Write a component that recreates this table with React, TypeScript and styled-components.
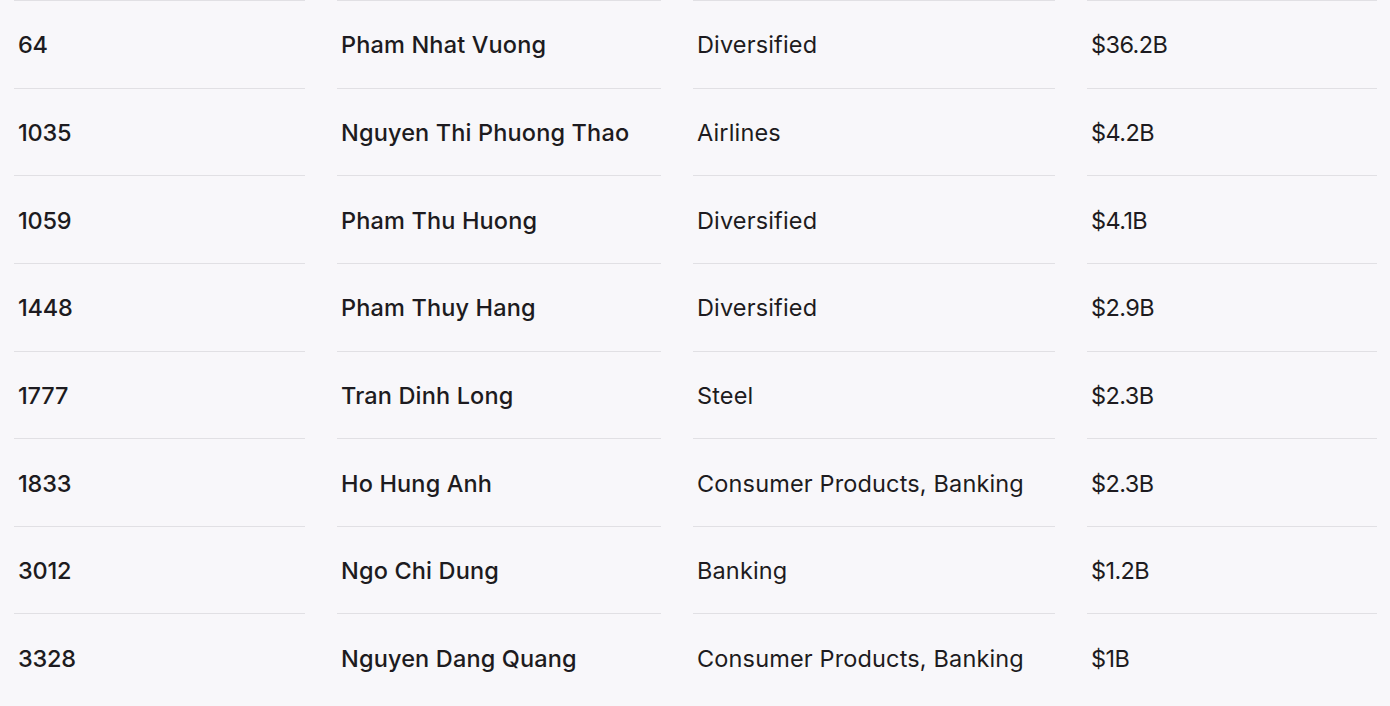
import styled, { createGlobalStyle } from 'styled-components';
import { Fragment } from 'react';

const GlobalStyle = createGlobalStyle`
    html, body {
        margin: 0;
        padding: 0;
        background: #f8f7fa;
        overflow: hidden;
    }
    body {
        font-family: Inter, Roboto, "Liberation Sans", sans-serif;
        color: #1d1b20;
    }
`;

const Table = styled.div`
    display: grid;
    grid-template-columns: 291px 324px 362px 290px;
    grid-auto-rows: 87.65px;
    column-gap: 32px;
    padding-left: 14px;
    width: 1390px;
    height: 706px;
    box-sizing: border-box;
    background: #f8f7fa;
    overflow: hidden;
`;

const Cell = styled.div<{ $strong?: boolean; $text?: boolean }>`
    box-sizing: border-box;
    display: flex;
    align-items: center;
    padding-left: 4px;
    padding-top: 1px;
    border-top: 1px solid #e1e0e4;
    font-size: 23.5px;
    font-weight: ${(p) => (p.$strong ? 500 : 400)};
    letter-spacing: ${(p) => (p.$text ? '0.15px' : p.$strong ? '-0.2px' : '-0.6px')};
    white-space: nowrap;
`;

const rows = [
    { rank: '64', name: 'Pham Nhat Vuong', industry: 'Diversified', worth: '$36.2B' },
    { rank: '1035', name: 'Nguyen Thi Phuong Thao', industry: 'Airlines', worth: '$4.2B' },
    { rank: '1059', name: 'Pham Thu Huong', industry: 'Diversified', worth: '$4.1B' },
    { rank: '1448', name: 'Pham Thuy Hang', industry: 'Diversified', worth: '$2.9B' },
    { rank: '1777', name: 'Tran Dinh Long', industry: 'Steel', worth: '$2.3B' },
    { rank: '1833', name: 'Ho Hung Anh', industry: 'Consumer Products, Banking', worth: '$2.3B' },
    { rank: '3012', name: 'Ngo Chi Dung', industry: 'Banking', worth: '$1.2B' },
    { rank: '3328', name: 'Nguyen Dang Quang', industry: 'Consumer Products, Banking', worth: '$1B' },
];

export default function App() {
    return (
        <>
            <GlobalStyle />
            <Table>
                {rows.map((r) => (
                    <Fragment key={r.rank}>
                        <Cell $strong>{r.rank}</Cell>
                        <Cell $strong $text>{r.name}</Cell>
                        <Cell $text>{r.industry}</Cell>
                        <Cell>{r.worth}</Cell>
                    </Fragment>
                ))}
            </Table>
        </>
    );
}
